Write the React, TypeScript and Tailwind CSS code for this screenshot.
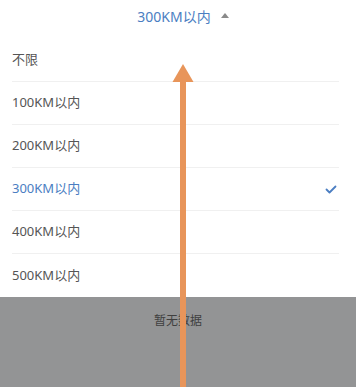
import React from "react";

const items = ["不限", "100KM以内", "200KM以内", "300KM以内", "400KM以内", "500KM以内"];
const selected = 3;

export default function App() {
  return (
    <div
      className="relative w-[356px] h-[387px] bg-white overflow-hidden"
      style={{ fontFamily: '"Noto Sans", "Noto Sans CJK SC", sans-serif' }}
    >
      <div className="h-[39px] flex items-center justify-center pl-[10px] pb-[6px] gap-[10px]">
        <span className="text-[14px] text-[#4b7ec2]">300KM以内</span>
        <svg width="8" height="5" viewBox="0 0 8 5" className="mt-[-2px]">
          <polygon points="4,0 8,5 0,5" fill="#8a8a8a" />
        </svg>
      </div>
      <div className="pl-[12px] pr-[17px]">
        {items.map((t, i) => (
          <div
            key={t}
            className={
              "flex items-center justify-between " +
              (i < items.length - 1 ? "h-[43px] border-b border-[#f0f0f0]" : "h-[43px]")
            }
          >
            <span
              className={
                "text-[13px] " + (i === selected ? "text-[#4b7ec2]" : "text-[#555555]")
              }
            >
              {t}
            </span>
            {i === selected && (
              <svg width="12" height="9" viewBox="0 0 12 9" className="mr-[2px]">
                <path d="M1.5 4.5 L4.5 7.5 L10.5 1.5" stroke="#4b7ec2" strokeWidth="1.8" fill="none" strokeLinecap="round" strokeLinejoin="round" />
              </svg>
            )}
          </div>
        ))}
      </div>
      <div className="h-[91px] bg-[#939495] flex justify-center pt-[15px]">
        <span className="text-[12px] text-[#3f3f3f]">暂无数据</span>
      </div>
      <svg
        className="absolute left-0 top-0 pointer-events-none"
        width="356"
        height="387"
        viewBox="0 0 356 387"
      >
        <rect x="180" y="80" width="6" height="307" fill="#e8955a" />
        <polygon points="183,64 193.5,82 172.5,82" fill="#e8955a" />
      </svg>
    </div>
  );
}
